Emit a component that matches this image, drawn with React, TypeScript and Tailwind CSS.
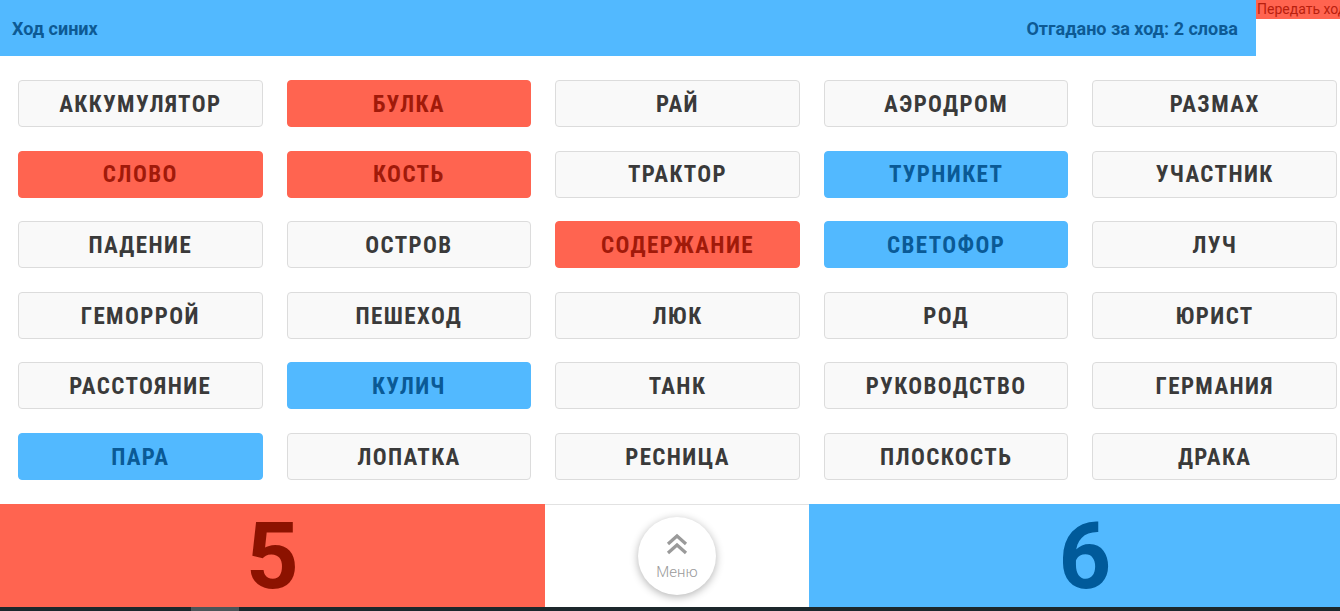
import React from "react";

type C = "n" | "r" | "b";
const words: [string, C][] = [
  ["АККУМУЛЯТОР", "n"], ["БУЛКА", "r"], ["РАЙ", "n"], ["АЭРОДРОМ", "n"], ["РАЗМАХ", "n"],
  ["СЛОВО", "r"], ["КОСТЬ", "r"], ["ТРАКТОР", "n"], ["ТУРНИКЕТ", "b"], ["УЧАСТНИК", "n"],
  ["ПАДЕНИЕ", "n"], ["ОСТРОВ", "n"], ["СОДЕРЖАНИЕ", "r"], ["СВЕТОФОР", "b"], ["ЛУЧ", "n"],
  ["ГЕМОРРОЙ", "n"], ["ПЕШЕХОД", "n"], ["ЛЮК", "n"], ["РОД", "n"], ["ЮРИСТ", "n"],
  ["РАССТОЯНИЕ", "n"], ["КУЛИЧ", "b"], ["ТАНК", "n"], ["РУКОВОДСТВО", "n"], ["ГЕРМАНИЯ", "n"],
  ["ПАРА", "b"], ["ЛОПАТКА", "n"], ["РЕСНИЦА", "n"], ["ПЛОСКОСТЬ", "n"], ["ДРАКА", "n"],
];

function Card({ w, c }: { w: string; c: C }) {
  const cls =
    c === "n"
      ? "bg-[#f9f9f9] border-[#dcdcdc] text-[#3a3a3a]"
      : c === "r"
      ? "bg-[#ff6450] border-[#ff6450] text-[#a11a0a]"
      : "bg-[#52b9ff] border-[#52b9ff] text-[#0a5a96]";
  return (
    <div
      className={`h-[47px] border rounded-[4px] flex items-center justify-center pt-[3px] text-[23px] font-bold tracking-[1.4px] ${cls}`}
      style={{ fontStretch: "75%" }}
    >
      {w}
    </div>
  );
}

export default function App() {
  return (
    <div
      className="w-[1340px] h-[611px] overflow-hidden bg-white flex flex-col"
      style={{ fontFamily: "Roboto, 'Noto Sans', sans-serif" }}
    >
      <div className="flex h-[56px] shrink-0">
        <div className="w-[1256px] shrink-0 bg-[#52b9ff] flex items-center justify-between pl-[12px] pr-[18px] text-[18px] font-bold text-[#0d5a94]">
          <span>Ход синих</span>
          <span>Отгадано за ход: 2 слова</span>
        </div>
        <div className="shrink-0 h-[19px] bg-[#ff6450] text-[#b8200e] text-[14px] leading-[19px] pl-[1px] pr-[6px] whitespace-nowrap">
          Передать ход
        </div>
      </div>
      <div className="grid grid-cols-5 gap-x-[24px] gap-y-[23.6px] pl-[18px] pr-[3px] pt-[24px] pb-[24px]">
        {words.map(([w, c]) => (
          <Card key={w} w={w} c={c} />
        ))}
      </div>
      <div className="flex h-[103px] shrink-0">
        <div className="w-[545px] shrink-0 bg-[#ff6450] flex items-center justify-center pt-[4px] text-[#8c1200] text-[92px] font-bold leading-none">
          5
        </div>
        <div className="w-[264px] shrink-0 border-t border-[#e2e2e2] flex items-center justify-center">
          <div className="w-[78px] h-[78px] rounded-full bg-white shadow-[0_2px_8px_rgba(0,0,0,0.3)] flex flex-col items-center justify-center pt-[4px]">
            <svg width="24" height="22" viewBox="0 0 24 22" fill="none" stroke="#9a9a9a" strokeWidth="3.2">
              <polyline points="3,11 12,3 21,11" />
              <polyline points="3,20 12,12 21,20" />
            </svg>
            <span className="text-[15px] text-[#9a9a9a] font-light mt-[6px]">Меню</span>
          </div>
        </div>
        <div className="flex-1 bg-[#52b9ff] flex items-center justify-center pt-[4px] pl-[21px] text-[#005a9a] text-[92px] font-bold leading-none">
          6
        </div>
      </div>
      <div className="h-[4px] bg-[#1c282c] flex shrink-0">
        <div className="ml-[191px] w-[48px] bg-[#4c5559]" />
      </div>
    </div>
  );
}
